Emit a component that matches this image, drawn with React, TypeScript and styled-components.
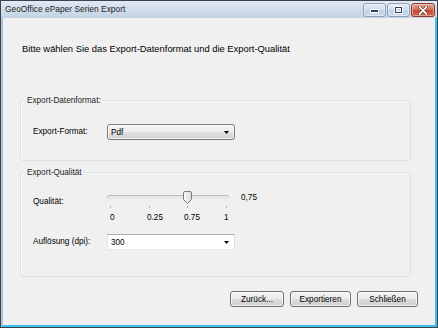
import React from "react";
import styled, { createGlobalStyle } from "styled-components";

const GlobalStyle = createGlobalStyle`
  html, body { margin: 0; padding: 0; }
  body {
    width: 438px;
    height: 328px;
    overflow: hidden;
    background: #ffffff;
    font-family: "Liberation Sans", Arial, sans-serif;
  }
  * { box-sizing: border-box; }
`;

const Window = styled.div`
  width: 438px;
  height: 328px;
  border: 1px solid #39434d;
  display: flex;
  flex-direction: column;
  background: #c9d7e6;
`;

const TitleBar = styled.div`
  height: 17px;
  flex: none;
  display: flex;
  align-items: flex-start;
  background: linear-gradient(to bottom, #e0e9f3 0%, #cfdcea 55%, #c3d3e5 100%);
`;

const TitleText = styled.span`
  font-size: 8.3px;
  line-height: 17px;
  color: #1b1b1b;
  padding-left: 4px;
  letter-spacing: 0.05px;
`;

const WinButtons = styled.div`
  margin-left: auto;
  margin-top: 2px;
  margin-right: 2px;
  display: flex;
  gap: 1px;
`;

const WinButton = styled.div<{ $w: number; $close?: boolean }>`
  width: ${(p) => p.$w}px;
  height: 14px;
  border: 1px solid ${(p) => (p.$close ? "#8a3a30" : "#8da0b6")};
  border-radius: 3px;
  display: flex;
  align-items: center;
  justify-content: center;
  background: ${(p) =>
    p.$close
      ? "linear-gradient(to bottom, #e8a393 0%, #d4705d 45%, #c24a33 55%, #cf6b4f 100%)"
      : "linear-gradient(to bottom, #e4ecf5 0%, #d0dded 45%, #bfd1e5 55%, #cadaeb 100%)"};
  box-shadow: inset 0 0 0 1px rgba(255, 255, 255, 0.4);
`;

const Body = styled.div`
  flex: 1;
  display: flex;
  flex-direction: column;
  background: #f0f0f0;
  border-left: 2px solid #b2bfcc;
  border-right: 2px solid #3dc3eb;
  border-bottom: 2px solid #3dc3eb;
  padding: 25px 24px 0 17px;
`;

const Instruction = styled.div`
  font-size: 9.4px;
  line-height: 12px;
  color: #000;
  padding-left: 2px;
`;

const GroupBox = styled.div<{ $top: number; $pt: number; $pb: number }>`
  position: relative;
  margin-top: ${(p) => p.$top}px;
  border: 1px solid #d8e0e8;
  border-radius: 3px;
  padding: ${(p) => p.$pt}px 12px ${(p) => p.$pb}px 12px;
  box-shadow: inset 1px 1px 0 #fbfbfb;
`;

const Caption = styled.span`
  position: absolute;
  top: -6px;
  left: 5px;
  padding: 0 1px;
  background: #f0f0f0;
  font-size: 8.2px;
  font-weight: 400;
  line-height: 11px;
  color: #1e1e1e;
`;

const Row = styled.div<{ $mt?: number }>`
  display: flex;
  align-items: center;
  margin-top: ${(p) => p.$mt ?? 0}px;
`;

const Label = styled.span<{ $mt?: number }>`
  width: 74px;
  flex: none;
  font-size: 8.2px;
  line-height: 12px;
  color: #000;
  margin-top: ${(p) => p.$mt ?? 0}px;
`;

const Combo = styled.div<{ $list?: boolean }>`
  width: 128px;
  height: 16px;
  display: flex;
  align-items: center;
  padding: 0 4px 0 3px;
  font-size: 8.2px;
  color: #000;
  border: 1px solid;
  border-color: ${(p) => (p.$list ? "#7a7a7a" : "#abadb3 #dbdfe6 #e3e9ef #e2e3ea")};
  border-radius: ${(p) => (p.$list ? "3px" : "1px")};
  background: ${(p) =>
    p.$list
      ? "linear-gradient(to bottom, #f4f4f4 0%, #ececec 50%, #dfdfdf 51%, #d3d3d3 100%)"
      : "#ffffff"};
  box-shadow: ${(p) => (p.$list ? "inset 0 0 0 1px rgba(255,255,255,0.7)" : "none")};
`;

const ComboText = styled.span`
  flex: 1;
`;

const Arrow = styled.svg`
  width: 5px;
  height: 3px;
  flex: none;
  margin-right: 1px;
`;

const SliderRow = styled.div`
  display: flex;
  align-items: flex-start;
`;

const SliderBox = styled.div`
  position: relative;
  width: 122px;
  height: 20px;
  flex: none;
`;

const Track = styled.div`
  position: absolute;
  left: 0;
  right: 0;
  top: 5px;
  height: 4px;
  border: 1px solid;
  border-color: #b9b9b9 #d0d0d0 #e6e6e6 #c4c4c4;
  border-radius: 2px;
  background: #e8e8e8;
`;

const TickRow = styled.div`
  position: absolute;
  left: 3px;
  right: 2px;
  top: 16px;
  display: flex;
  justify-content: space-between;
`;

const Tick = styled.span`
  width: 1px;
  height: 2px;
  background: #b0b0b0;
`;

const Thumb = styled.svg`
  position: absolute;
  top: 1px;
  width: 9px;
  height: 13px;
`;

const SliderValue = styled.span`
  font-size: 8.2px;
  line-height: 12px;
  margin-top: 2px;
  margin-left: 12px;
  color: #000;
`;

const TickLabels = styled.div`
  display: flex;
  margin-left: 77px;
  margin-top: 2px;
  height: 12px;
`;

const TickLabel = styled.span<{ $w: number }>`
  width: ${(p) => p.$w}px;
  flex: none;
  font-size: 8.2px;
  line-height: 12px;
  color: #000;
`;

const ButtonRow = styled.div`
  display: flex;
  justify-content: flex-end;
  gap: 6px;
  margin-top: 14px;
  margin-right: -7px;
`;

const Button = styled.button<{ $w: number }>`
  width: ${(p) => p.$w}px;
  height: 16px;
  padding: 0;
  font-family: "Liberation Sans", Arial, sans-serif;
  font-size: 8.2px;
  color: #000;
  border: 1px solid #707070;
  border-radius: 3px;
  background: linear-gradient(to bottom, #f2f2f2 0%, #ebebeb 50%, #dddddd 51%, #cfcfcf 100%);
  box-shadow: inset 0 0 0 1px rgba(255, 255, 255, 0.75);
`;

const DropArrow = () => (
  <Arrow viewBox="0 0 5 3">
    <path d="M0 0 H5 L2.5 3 Z" fill="#000" />
  </Arrow>
);

const ticks = ["0", "0.25", "0.75", "1"];
const tickWidths = [37, 37, 40, 10];

export default function App() {
  const value = 0.75;
  const thumbLeft = 3 + (2 / 3) * 116 - 4;
  return (
    <>
      <GlobalStyle />
      <Window>
        <TitleBar>
          <TitleText>GeoOffice ePaper Serien Export</TitleText>
          <WinButtons>
            <WinButton $w={23}>
              <svg width="9" height="6" viewBox="0 0 9 6">
                <rect x="0.5" y="2.5" width="8" height="3" fill="#2c3e55" stroke="#ffffff" strokeWidth="1" />
              </svg>
            </WinButton>
            <WinButton $w={23}>
              <svg width="9" height="8" viewBox="0 0 9 8">
                <rect x="0.5" y="0.5" width="8" height="7" fill="none" stroke="#ffffff" strokeWidth="1" />
                <rect x="1.5" y="1.5" width="6" height="5" fill="none" stroke="#2c3e55" strokeWidth="1" />
                <rect x="2.5" y="2.5" width="4" height="3" fill="none" stroke="#ffffff" strokeWidth="1" />
              </svg>
            </WinButton>
            <WinButton $w={24} $close>
              <svg width="10" height="9" viewBox="0 0 10 9">
                <path d="M1.5 1 L8.5 8 M8.5 1 L1.5 8" stroke="#5a1a10" strokeWidth="3" strokeLinecap="round" />
                <path d="M1.5 1 L8.5 8 M8.5 1 L1.5 8" stroke="#ffffff" strokeWidth="1.8" strokeLinecap="round" />
              </svg>
            </WinButton>
          </WinButtons>
        </TitleBar>
        <Body>
          <Instruction>Bitte wählen Sie das Export-Datenformat und die Export-Qualität</Instruction>

          <GroupBox $top={45} $pt={23} $pb={20}>
            <Caption>Export-Datenformat:</Caption>
            <Row>
              <Label>Export-Format:</Label>
              <Combo $list>
                <ComboText>Pdf</ComboText>
                <DropArrow />
              </Combo>
            </Row>
          </GroupBox>

          <GroupBox $top={11} $pt={17} $pb={26}>
            <Caption>Export-Qualität</Caption>
            <SliderRow>
              <Label $mt={6}>Qualität:</Label>
              <SliderBox>
                <Track />
                <TickRow>
                  {ticks.map((t) => (
                    <Tick key={t} />
                  ))}
                </TickRow>
                <Thumb viewBox="0 0 9 13" style={{ left: `${thumbLeft}px` }}>
                  <defs>
                    <linearGradient id="thumbFill" x1="0" y1="0" x2="1" y2="0">
                      <stop offset="0" stopColor="#fbfbfb" />
                      <stop offset="1" stopColor="#d9d9d9" />
                    </linearGradient>
                  </defs>
                  <path
                    d="M0.5 2 Q0.5 0.5 2 0.5 H7 Q8.5 0.5 8.5 2 V8.5 L4.5 12.5 L0.5 8.5 Z"
                    fill="url(#thumbFill)"
                    stroke="#7b7b7b"
                    strokeWidth="1"
                  />
                </Thumb>
              </SliderBox>
              <SliderValue>{value.toFixed(2).replace(".", ",")}</SliderValue>
            </SliderRow>
            <TickLabels>
              {ticks.map((t, i) => (
                <TickLabel key={t} $w={tickWidths[i]}>
                  {t}
                </TickLabel>
              ))}
            </TickLabels>
            <Row $mt={10}>
              <Label>Auflösung (dpi):</Label>
              <Combo>
                <ComboText>300</ComboText>
                <DropArrow />
              </Combo>
            </Row>
          </GroupBox>

          <ButtonRow>
            <Button $w={54}>Zurück...</Button>
            <Button $w={61}>Exportieren</Button>
            <Button $w={61}>Schließen</Button>
          </ButtonRow>
        </Body>
      </Window>
    </>
  );
}
